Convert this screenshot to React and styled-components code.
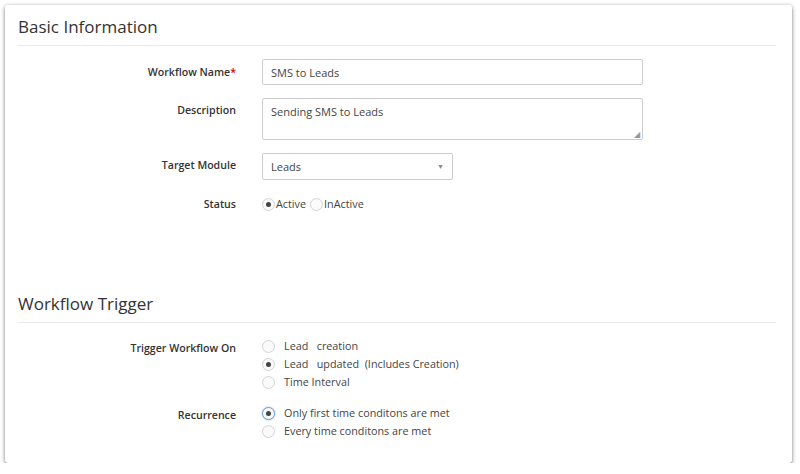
import React from "react";
import styled, { createGlobalStyle } from "styled-components";

const Global = createGlobalStyle`
  body { margin: 0; background: #fff; font-family: "Open Sans", sans-serif; color: #333; }
`;
const Card = styled.div`
  margin: 5px 8px 0 5px; height: 458px; box-sizing: border-box;
  background: #fff; border-radius: 3px;
  box-shadow: 0 1px 4px rgba(0,0,0,0.45), 0 2px 2px rgba(0,0,0,0.2);
  padding: 10px 16px 0 13px;
`;
const Heading = styled.div`
  font-size: 17px; color: #333; padding-bottom: 6px; border-bottom: 1px solid #e8e8e8;
  margin-top: ${p => p.$top || 0}px; line-height: 24px;
`;
const Rows = styled.div`display: flex; flex-direction: column; gap: ${p => p.$gap}px; margin-top: ${p => p.$top}px;`;
const Row = styled.div`display: grid; grid-template-columns: 218px 1fr; column-gap: 26px; align-items: start;`;
const Label = styled.div`
  text-align: right; font-size: 10.6px; font-weight: 600; color: #333; line-height: 16px; padding-top: ${p => p.$pt || 0}px;
`;
const Req = styled.span`color: #d00;`;
const Input = styled.div`
  width: ${p => p.$w}px; height: ${p => p.$h}px; box-sizing: border-box; border: 1px solid #ccc; border-radius: 2px;
  font-size: 11px; color: #444; padding: ${p => p.$area ? "5px" : "0"} 8px; display: flex;
  align-items: ${p => p.$area ? "flex-start" : "center"}; justify-content: space-between; position: relative;
`;
const Grip = styled.span`position: absolute; right: 2px; bottom: 1px; font-size: 8px; color: #999; line-height: 8px;`;
const Caret = styled.span`font-size: 7px; color: #888;`;
const Radios = styled.div`display: flex; flex-direction: column; gap: 2px;`;
const Inline = styled.div`display: flex; align-items: center; gap: 4px; padding-top: 3px;`;
const Opt = styled.label`display: flex; align-items: center; gap: ${p => p.$gap ?? 9}px; font-size: 10.8px; color: #444; line-height: 16px; white-space: pre;`;
const Dot = styled.span`
  width: 13px; height: 13px; border-radius: 50%; box-sizing: border-box; flex: none;
  border: 1px solid ${p => p.$blue ? "#6aa0e0" : "#d4d4d4"}; background: #fafafa;
  display: flex; align-items: center; justify-content: center;
  box-shadow: ${p => p.$blue ? "0 0 2px #8ab4ee" : "none"};
  &::after { content: ""; width: 5px; height: 5px; border-radius: 50%; background: ${p => p.$on ? "#444" : "transparent"}; }
`;

export default function App() {
  return (
    <>
      <Global />
      <Card>
        <Heading>Basic Information</Heading>
        <Rows $gap={13} $top={13}>
          <Row>
            <Label $pt={5}>Workflow Name<Req>*</Req></Label>
            <Input $w={381} $h={26}>SMS to Leads</Input>
          </Row>
          <Row>
            <Label $pt={4}>Description</Label>
            <Input $w={381} $h={42} $area>Sending SMS to Leads<Grip>◢</Grip></Input>
          </Row>
          <Row>
            <Label $pt={4}>Target Module</Label>
            <Input $w={191} $h={27}>Leads<Caret>▼</Caret></Input>
          </Row>
          <Row>
            <Label $pt={3}>Status</Label>
            <Inline>
              <Opt $gap={1}><Dot $on />Active</Opt>
              <Opt $gap={1}><Dot />InActive</Opt>
            </Inline>
          </Row>
        </Rows>
        <Heading $top={80}>Workflow Trigger</Heading>
        <Rows $gap={15} $top={15}>
          <Row>
            <Label $pt={2}>Trigger Workflow On</Label>
            <Radios>
              <Opt><Dot />Lead   creation</Opt>
              <Opt><Dot $on />Lead   updated  (Includes Creation)</Opt>
              <Opt><Dot />Time Interval</Opt>
            </Radios>
          </Row>
          <Row>
            <Label $pt={2}>Recurrence</Label>
            <Radios>
              <Opt><Dot $on $blue />Only first time conditons are met</Opt>
              <Opt><Dot />Every time conditons are met</Opt>
            </Radios>
          </Row>
        </Rows>
      </Card>
    </>
  );
}
